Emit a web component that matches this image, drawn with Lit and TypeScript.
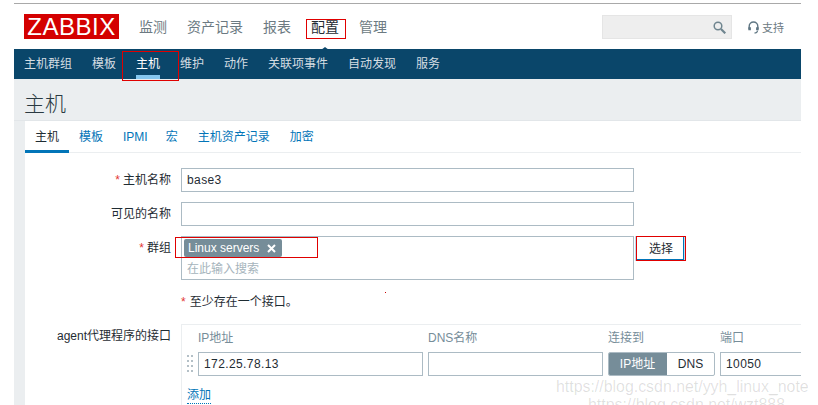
import { LitElement, html, css } from "lit";
import { customElement } from "lit/decorators.js";

@customElement("app-root")
export class AppRoot extends LitElement {
  static styles = css`
    :host { display: block; width: 818px; height: 405px; overflow: hidden; background: #fff; position: relative;
      font-family: "Liberation Sans", "Noto Sans CJK SC", sans-serif; font-size: 12px; color: #1f2c33; }
    * { box-sizing: border-box; }
    .page { margin-left: 14px; width: 787px; height: 405px; overflow: hidden; padding-top: 3px; }
    .topline { height: 1px; background: #a9a9a9; }
    .header { height: 45px; display: flex; align-items: flex-start; padding: 10px 0 0 10px; position: relative; }
    .logo { width: 95px; height: 25px; background: #d40000; color: #fff; font-size: 24px; line-height: 26px; letter-spacing: .5px; text-align: center; white-space: nowrap; }
    .main { display: flex; gap: 20px; margin-left: 20px; font-size: 14px; line-height: 27px; color: #6c7a82; }
    .main .on { color: #1f2c33; position: relative; }
    .caret { position: absolute; left: 50%; bottom: -12px; margin-left: -8px; width: 0; height: 0; border-left: 8px solid transparent; border-right: 8px solid transparent; border-bottom: 6px solid #0a466a; }
    .right { margin-left: auto; display: flex; align-items: center; margin-top: 1px; margin-right: 17px; }
    .search { width: 130px; height: 24px; background: #eee; border: 1px solid #e5e5e5; display: flex; align-items: center; justify-content: flex-end; padding-right: 5px; }
    .support { display: flex; align-items: center; gap: 3px; margin-left: 16px; font-size: 11px; color: #6c7a82; }
    .sub { height: 30px; background: #0a466a; display: flex; gap: 20px; padding-left: 10px; color: #d5dde2; line-height: 30px; position: relative; }
    .sub span { position: relative; white-space: nowrap; }
    .sub .on { color: #fff; }
    .sub .on::after { content: ""; position: absolute; left: 0; right: 0; bottom: 0; height: 4px; background: #86c7ef; }
    .body { background: #ebeef0; height: 326px; padding-left: 11px; }
    .title { height: 42px; font-size: 21px; line-height: 49px; font-weight: 300; color: #2b3a42; border-bottom: 1px solid #e2e6e9; margin-left: -11px; padding-left: 10px; }
    .card { background: #fff; width: 776px; height: 290px; overflow: hidden; }
    .tabs { height: 32px; display: flex; gap: 20px; padding: 0 0 0 10px; border-bottom: 1px solid #ebeef0; line-height: 33px; color: #0275b8; position: relative; }
    .tabs .on { color: #1f2c33; position: relative; }
    .tabs .on::after { content: ""; position: absolute; left: -10px; right: -10px; top: 29px; height: 3px; background: #0275b8; }
    .tabs .ipmi { margin-right: -2px; }
    .form { padding-top: 15px; display: flex; flex-direction: column; gap: 10px; }
    .row { display: flex; gap: 10px; }
    .lab { flex: none; width: 146px; text-align: right; line-height: 24px; white-space: nowrap; }
    .lab.top { line-height: 22px; }
    .req { color: #e33734; margin-right: 3px; }
    .input { height: 24px; width: 453px; border: 1px solid #acbbc4; padding: 0 5px; line-height: 22px; letter-spacing: .4px; background: #fff; white-space: nowrap; }
    .multi { width: 453px; height: 44px; border: 1px solid #acbbc4; padding: 2px 0 0 2px; }
    .tag { display: inline-flex; align-items: center; width: 98px; height: 18px; background: #768d99; color: #fff; border-radius: 2px; padding-left: 4px; }
    .tag svg { margin-left: 8px; }
    .ph { color: #a6b4bc; margin: 4px 0 0 3px; line-height: 16px; }
    .btn { width: 48px; height: 23px; margin-left: -8px; margin-top: 1px; padding-left: 3px; border: 1px solid #0275b8; border-width: 0 1px 1px 0; background: #fff; text-align: center; line-height: 24px; box-shadow: 0 0 0 1px #bcdcf0; }
    .note { margin-left: 156px; line-height: 18px; margin-top: 3px; margin-bottom: 4px; }
    .note .req { margin-right: 4px; }
    .wrapline { margin-top: 9px; }
    .wrapline .lab { margin-top: 1px; }
    .ifs { flex: none; width: 640px; height: 90px; border: solid #ebeef0; border-width: 1px 0 0 1px; padding: 5px 0 0 16px; }
    .ifgrid { display: grid; grid-template-columns: 225px 175px 107px 90px; column-gap: 5px; }
    .ifgrid .h { color: #768d99; line-height: 16px; height: 22px; }
    .in2 { height: 24px; border: 1px solid #acbbc4; padding: 0 5px; line-height: 22px; letter-spacing: .4px; white-space: nowrap; }
    .grip { position: absolute; left: -11px; top: 3px; width: 6px; height: 18px; }
    .ipcell { position: relative; }
    .toggle { display: flex; height: 24px; border: 1px solid #acbbc4; border-radius: 2px; line-height: 22px; text-align: center; overflow: hidden; }
    .toggle .a { width: 59px; margin: -1px 0 -1px -1px; line-height: 24px; background: #768d99; color: #fff; }
    .toggle .b { flex: 1; }
    .add { display: inline-block; color: #0275b8; margin: 12px 0 0 -11px; line-height: 15px; border-bottom: 1px dotted #0275b8; }
    .box { position: absolute; border: 1px solid #e00000; pointer-events: none; }
    .b1 { left: 306px; top: 19px; width: 40px; height: 20px; }
    .b2 { left: 122px; top: 51px; width: 57px; height: 30px; }
    .b3 { left: 175px; top: 237px; width: 143px; height: 21px; }
    .b4 { left: 636px; top: 236px; width: 50px; height: 25px; }
    .dot { position: absolute; left: 385px; top: 292px; width: 1px; height: 1px; background: #c00; }
    .wm { position: absolute; color: rgba(0,0,0,.13); font-size: 15.9px; line-height: 20px; white-space: nowrap; pointer-events: none; }
    .w1 { left: 556px; top: 377px; }
    .w2 { left: 588px; top: 395px; }
  `;

  render() {
    return html`
      <div class="page">
        <div class="topline"></div>
        <div class="header">
          <div class="logo">ZABBIX</div>
          <div class="main">
            <span>监测</span><span>资产记录</span><span>报表</span>
            <span class="on">配置<i class="caret"></i></span><span>管理</span>
          </div>
          <div class="right">
            <div class="search">
              <svg width="13" height="13" viewBox="0 0 13 13" fill="none" stroke="#6f858f" stroke-width="1.5"><circle cx="5" cy="5" r="3.8"/><path d="M8 8 L12.3 12.3" stroke-width="2.2"/></svg>
            </div>
            <div class="support">
              <svg width="11" height="13" viewBox="0 0 11 13" fill="none" stroke="#5f7683" stroke-width="1.4"><path d="M1.2 8V5.3a4.3 4.3 0 0 1 8.6 0V8"/><path d="M1.6 6.2v3M9.4 6.2v3" stroke-width="2.6"/><path d="M9.6 9.6 Q9.2 12 6.4 12" stroke-width="1.1"/></svg>
              <span>支持</span>
            </div>
          </div>
        </div>
        <div class="sub">
          <span>主机群组</span><span>模板</span><span class="on">主机</span><span>维护</span><span>动作</span><span>关联项事件</span><span>自动发现</span><span>服务</span>
        </div>
        <div class="body">
          <div class="title">主机</div>
          <div class="card">
            <div class="tabs">
              <span class="on">主机</span><span>模板</span><span class="ipmi">IPMI</span><span>宏</span><span>主机资产记录</span><span>加密</span>
            </div>
            <div class="form">
              <div class="row"><div class="lab"><span class="req">*</span>主机名称</div><div class="input">base3</div></div>
              <div class="row"><div class="lab">可见的名称</div><div class="input"></div></div>
              <div class="row">
                <div class="lab"><span class="req">*</span>群组</div>
                <div class="multi">
                  <div class="tag">Linux servers
                    <svg width="9" height="9" viewBox="0 0 9 9" stroke="#fff" stroke-width="2"><path d="M1 1 L8 8 M8 1 L1 8"/></svg>
                  </div>
                  <div class="ph">在此输入搜索</div>
                </div>
                <div class="btn">选择</div>
              </div>
              <div class="note"><span class="req">*</span>至少存在一个接口。</div>
            </div>
            <div class="row wrapline">
              <div class="lab top">agent代理程序的接口</div>
              <div class="ifs">
                <div class="ifgrid">
                  <div class="h">IP地址</div><div class="h">DNS名称</div><div class="h">连接到</div><div class="h">端口</div>
                  <div class="ipcell">
                    <svg class="grip" viewBox="0 0 6 18" fill="#b4c0c7"><rect x="0" y="0" width="2" height="2"/><rect x="4" y="0" width="2" height="2"/><rect x="0" y="5" width="2" height="2"/><rect x="4" y="5" width="2" height="2"/><rect x="0" y="10" width="2" height="2"/><rect x="4" y="10" width="2" height="2"/><rect x="0" y="15" width="2" height="2"/><rect x="4" y="15" width="2" height="2"/></svg>
                    <div class="in2">172.25.78.13</div>
                  </div>
                  <div class="in2"></div>
                  <div class="toggle"><div class="a">IP地址</div><div class="b">DNS</div></div>
                  <div class="in2">10050</div>
                </div>
                <span class="add">添加</span>
              </div>
            </div>
          </div>
        </div>
      </div>
      <div class="box b1"></div><div class="box b2"></div><div class="box b3"></div><div class="box b4"></div>
      <div class="dot"></div>
      <div class="wm w1">https://blog.csdn.net/yyh_linux_note</div>
      <div class="wm w2">https://blog.csdn.net/wzt888</div>
    `;
  }
}
